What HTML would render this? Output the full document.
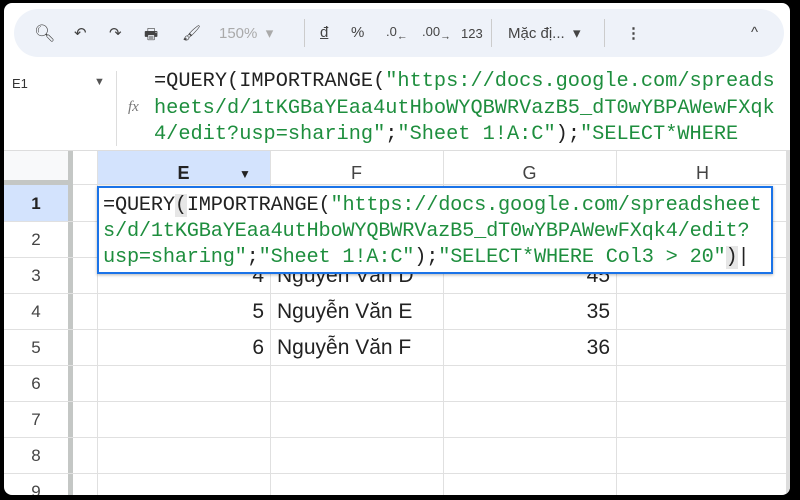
<!DOCTYPE html>
<html><head><meta charset="utf-8"><style>
*{margin:0;padding:0;box-sizing:border-box}
body{width:800px;height:500px;background:#000;position:relative;overflow:hidden;font-family:"Liberation Sans",Arial,sans-serif}
.page{position:absolute;left:4px;top:3px;width:786px;height:492px;background:#fff;border-radius:8px;overflow:hidden}
.tb{position:absolute;left:10px;top:6px;width:770px;height:48px;background:#eef2f9;border-radius:24px;color:#444;font-size:15px}
.tb span{position:absolute;top:15px}
.fx{position:absolute;left:0;top:58px;width:786px;height:90px;background:#fff;border-bottom:1px solid #ddd}
.ftxt{position:absolute;left:150px;top:8px;font-family:"Liberation Mono",monospace;font-size:20.3px;line-height:26.5px;color:#222;white-space:pre}
.g{color:#1e8e3e}
.hl{position:absolute;background:#e0e0e0}
.cell{position:absolute;font-size:21px;color:#222}
.num{position:absolute;font-size:21px;color:#222;text-align:right}
.rh{position:absolute;left:0;width:64px;text-align:center;font-size:17px;color:#444}
.ch{position:absolute;top:160px;font-size:18px;color:#444;text-align:center}
.edit{position:absolute;left:93px;top:183px;width:676px;height:88px;border:2px solid #1a73e8;background:#fff;box-shadow:0 1px 3px rgba(0,0,0,.3)}
.etxt{position:absolute;left:4px;top:5px;font-family:"Liberation Mono",monospace;font-size:20.3px;line-height:26px;color:#222;white-space:pre;letter-spacing:-0.2px}
</style></head><body><div class="page">
<div class="tb">
<span style="left:20px;font-size:17px">&#x1F50D;&#xFE0E;</span>
<span style="left:60px">↶</span><span style="left:95px">↷</span>
<span style="left:130px">🖶&#xFE0E;</span><span style="left:168px">🖌&#xFE0E;</span>
<span style="left:205px;color:#aaa">150%&nbsp;&nbsp;▾</span>
<span style="left:290px;top:10px;width:1px;height:28px;background:#ccc"></span>
<span style="left:306px;text-decoration:underline">đ</span>
<span style="left:337px">%</span>
<span style="left:372px;font-size:13px">.0<sub>←</sub></span>
<span style="left:408px;font-size:13px">.00<sub>→</sub></span>
<span style="left:447px;font-size:13px;top:17px">123</span>
<span style="left:477px;top:10px;width:1px;height:28px;background:#ccc"></span>
<span style="left:494px">Mặc đị...&nbsp;&nbsp;▾</span>
<span style="left:590px;top:10px;width:1px;height:28px;background:#ccc"></span>
<span style="left:612px;font-weight:bold">⋮</span>
<span style="left:737px">^</span>
</div>
<div class="fx">
<div style="position:absolute;left:8px;top:15px;font-size:13px;color:#333">E1</div>
<div style="position:absolute;left:90px;top:15px;font-size:11px;color:#555">▼</div>
<div style="position:absolute;left:112px;top:10px;width:1px;height:75px;background:#ddd"></div>
<div style="position:absolute;left:124px;top:38px;font-size:15px;color:#777;font-style:italic;font-family:'Liberation Serif',serif">fx</div>
<div class="ftxt">=QUERY(IMPORTRANGE(<span class="g">"https://docs.google.com/spreads
heets/d/1tKGBaYEaa4utHboWYQBWRVazB5_dT0wYBPAWewFXqk
4/edit?usp=sharing"</span>;<span class="g">"Sheet 1!A:C"</span>);<span class="g">"SELECT*WHERE</span></div>
</div>
<div style="position:absolute;left:0;top:148px;width:68px;height:32px;background:#f8f9fa"></div>
<div class="hl" style="left:0;top:177px;width:68px;height:5px;background:#c4c7c5"></div>
<div class="hl" style="left:64px;top:148px;width:5px;height:344px;background:#c4c7c5"></div>
<div style="position:absolute;left:93px;top:148px;width:173px;height:33px;background:#d3e3fd"></div>
<div class="hl" style="left:69px;top:181px;width:717px;height:1px"></div>
<div class="hl" style="left:93px;top:148px;width:1px;height:344px"></div>
<div class="hl" style="left:266px;top:148px;width:1px;height:344px"></div>
<div class="hl" style="left:439px;top:148px;width:1px;height:344px"></div>
<div class="hl" style="left:612px;top:148px;width:1px;height:344px"></div>
<div class="ch" style="left:93px;width:173px;font-weight:bold;color:#222">E<span style="position:absolute;left:142px;font-size:12px;top:4px">▼</span></div>
<div class="ch" style="left:266px;width:173px">F</div>
<div class="ch" style="left:439px;width:173px">G</div>
<div class="ch" style="left:612px;width:173px">H</div>
<div style="position:absolute;left:0;top:182px;width:64px;height:36px;background:#d3e3fd"></div>
<div class="hl" style="left:0;top:218px;width:786px;height:1px"></div>
<div class="hl" style="left:0;top:254px;width:786px;height:1px"></div>
<div class="hl" style="left:0;top:290px;width:786px;height:1px"></div>
<div class="hl" style="left:0;top:326px;width:786px;height:1px"></div>
<div class="hl" style="left:0;top:362px;width:786px;height:1px"></div>
<div class="hl" style="left:0;top:398px;width:786px;height:1px"></div>
<div class="hl" style="left:0;top:434px;width:786px;height:1px"></div>
<div class="hl" style="left:0;top:470px;width:786px;height:1px"></div>
<div class="rh" style="top:191px;font-weight:bold;color:#222">1</div>
<div class="rh" style="top:227px">2</div>
<div class="rh" style="top:263px">3</div>
<div class="rh" style="top:299px">4</div>
<div class="rh" style="top:335px">5</div>
<div class="rh" style="top:371px">6</div>
<div class="rh" style="top:407px">7</div>
<div class="rh" style="top:443px">8</div>
<div class="rh" style="top:479px">9</div>
<div class="num" style="left:200px;width:60px;top:261px">4</div><div class="cell" style="left:273px;top:261px">Nguyễn Văn D</div><div class="num" style="left:546px;width:60px;top:261px">45</div>
<div class="num" style="left:200px;width:60px;top:297px">5</div><div class="cell" style="left:273px;top:297px">Nguyễn Văn E</div><div class="num" style="left:546px;width:60px;top:297px">35</div>
<div class="num" style="left:200px;width:60px;top:333px">6</div><div class="cell" style="left:273px;top:333px">Nguyễn Văn F</div><div class="num" style="left:546px;width:60px;top:333px">36</div>
<div class="edit"><div class="etxt">=QUERY<span style="background:#e6e6e6">(</span>IMPORTRANGE(<span class="g">"https://docs.google.com/spreadsheet
s/d/1tKGBaYEaa4utHboWYQBWRVazB5_dT0wYBPAWewFXqk4/edit?
usp=sharing"</span>;<span class="g">"Sheet 1!A:C"</span>);<span class="g">"SELECT*WHERE Col3 &gt; 20"</span><span style="background:#e6e6e6">)</span>|</div></div>
<div style="position:absolute;right:0;top:148px;width:4px;height:344px;background:#ddd"></div>
</div></body></html>
